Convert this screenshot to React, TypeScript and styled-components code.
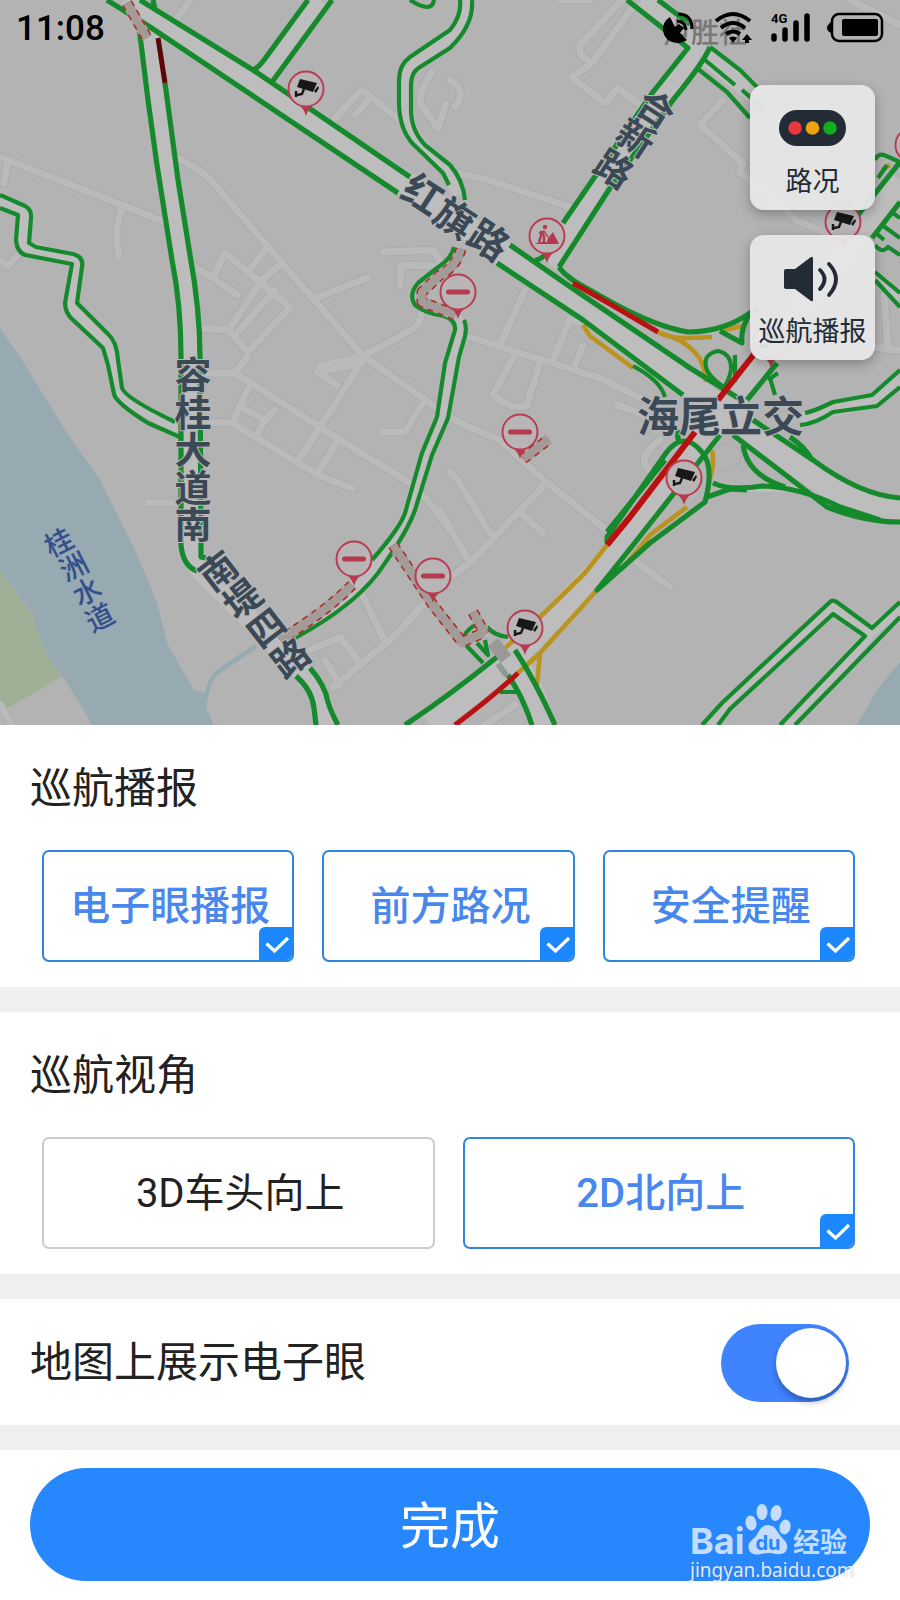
import React, { useState } from "react";
import styled, { createGlobalStyle } from "styled-components";

const Global = createGlobalStyle`
  *, *::before, *::after { box-sizing: border-box; }
  body {
    margin: 0;
    background: #fff;
    color: #222;
    font-family: Roboto, "Noto Sans CJK SC", sans-serif;
  }
  button, input { font: inherit; margin: 0; }
`;

const GREEN = "#158a2c";
const RED = "#b91111";
const AMBER = "#bb9420";
const ROAD = "#bdbdbd";

/* ---------- map ---------- */

const MapArea = styled.section`
  position: relative;
  height: 725px;
  overflow: hidden;
  background: #b3b3b3;
`;

const MapCanvas = styled.svg`
  display: block;
  width: 100%;
  height: 100%;
  text {
    font-family: "Noto Sans CJK SC", sans-serif;
    text-anchor: middle;
    dominant-baseline: central;
  }
`;

const lanes = [
  "M0 157L165 222M8 160L4 183M122 208Q114 230 119 256",
  "M178 158Q205 172 215 185L282 263L363 356L440 410Q450 420 500 440L547 483L612 534M637 562L670 587",
  "M193 266L213 278L237 295M213 278L225 253L290 307L248 352L228 330L200 328M248 272L267 247M282 263L262 280L230 328M275 290L237 333",
  "M315 298L367 278M320 367L363 356L415 328Q424 318 420 308",
  "M205 373L235 373L345 443L410 483Q430 500 450 530M247 357L235 373M250 385L232 423L320 476L352 488M363 360L297 463M338 440L317 475M242 408L265 420L275 410M265 420L258 433",
  "M355 365L317 372L337 385M423 403L405 432L383 432",
  "M383 252L433 250L443 265M400 285L401 265L440 266",
  "M470 337L510 350L600 378L645 400M500 345L525 290M513 358L493 395Q515 412 527 405L540 362M552 362L570 320L590 325M573 370L583 345",
  "M450 472L458 480L490 533M546 483L470 563L450 577L393 637L333 688M440 510L470 563M519 512L543 533M360 590L383 638M310 650L340 637L360 663M325 660L340 685",
  "M622 0L580 45Q578 56 592 63L572 77L605 103L618 88L640 105M592 63L632 8M450 172L485 179L570 207",
  "M850 0L900 25M723 100L700 125L743 163L740 172L775 200L796 220L830 235",
  "M335 118L362 90L397 118M355 115L370 98M432 72Q420 90 420 103L438 128L446 104M450 80Q468 90 455 107",
  "M190 0L178 17M485 725L515 705M148 503L175 503M617 405L645 415M660 440Q632 460 655 475M190 430Q205 420 232 423",
  "M900 350L850 345M884 295L888 350M590 0L560 0M0 260L8 266L20 252M0 705L12 725",
];

const roadBeds = [
  { d: "M124 0L420 193L504 254L660 364L745 425Q815 480 850 500Q875 510 900 510", w: 24 },
  { d: "M149 32L160 130L184 270Q190 310 191 357L191 545Q191 562 205 575L305 674Q322 690 328 725", w: 19 },
  { d: "M320 0L264 74", w: 22 },
  { d: "M642 0L697 48L660 100L550 265", w: 19 },
  { d: "M900 180L766 358L602 567L511 660Q470 695 430 725", w: 24 },
  { d: "M502 645Q530 675 544 725", w: 23 },
  { d: "M466 0Q470 22 450 37L409 67Q402 80 405 110Q409 135 430 153Q448 165 458 195", w: 12 },
  { d: "M456 318L461 330L443 417L425 457L408 513L395 540L365 578Q340 605 285 638", w: 12 },
  { d: "M0 201L22 210Q26 230 22 245L75 259L71 306L108 343Q114 390 122 398L180 430", w: 11 },
  { d: "M800 419L875 401L900 380M710 725L725 707L833 606L869 632L900 609M869 635L787 725M875 276L900 298", w: 12 },
  { d: "M704 54L757 95", w: 20 },
  { d: "M715 485Q740 490 800 488", w: 7 },
];

const greenMajor = [
  "M140 0L253 70L410 177M510 245L572 288L690 368L738 398",
  "M107 0L150 27L398 193M497 263L583 320L683 395",
  "M753 420L813 460Q860 495 900 498",
  "M733 435L783 473L827 507Q865 522 900 522",
  "M139 27L148 100L157 165L172 260Q181 305 181 357L181 545Q183 566 197 571M296 676Q312 690 314 708L316 725",
  "M165 83L178 180L190 255Q200 310 200 357L201 557L206 558M310 668Q325 685 328 702Q331 712 338 725",
  "M308 0L264 60Q258 68 253 70M332 0L272 82M153 0L155 10",
  "M627 0L688 48L653 92L563 223M658 0L690 24M710 47Q704 62 673 100L610 188L559 267M555 240Q545 260 535 260",
  "M559 267Q566 278 590 290Q650 326 688 332Q728 332 758 307",
  "M900 162L858 215M900 202L872 238",
  "M777 363L747 400M720 435L637 540L597 590L650 543L705 502Q715 465 701 451Q683 430 666 453L607 537L607 543M665 460L607 532",
  "M497 657Q450 695 405 725M515 650Q535 680 555 725M508 675Q523 697 532 725",
  "M743 445Q747 475 785 487M713 483Q730 491 762 486Q800 487 840 507L880 520M707 497L730 489L747 490",
  "M790 437Q805 447 812 460M720 331L742 343Q740 330 750 313M679 430Q676 438 680 442",
];

const greenMinor = [
  "M0 195L25 206Q32 210 31 218L29 243L36 247L73 254Q84 257 82 267L77 303L108 334Q117 342 118 360L122 388Q125 398 175 422",
  "M0 208L18 215L16 240Q17 252 25 255L72 264L65 303Q65 313 73 320L103 348L108 365L114 394Q116 403 148 423L180 437",
  "M460 0Q462 15 450 30L410 57Q399 65 399 80L399 105Q400 130 413 144L443 173L449 185",
  "M472 0Q474 25 450 48L420 67Q411 72 411 85L411 110Q411 130 425 145L450 165Q463 180 465 200M410 0Q432 14 434 0",
  "M710 47L740 70L757 87M705 60L735 85M698 69L727 92L750 118M742 90L765 110",
  "M454 247Q452 258 437 268L418 283Q408 295 415 305Q425 313 444 316Q456 320 455 330L445 363L437 417L422 453L405 513Q400 528 372 560",
  "M464 320Q467 326 465 336L459 357L448 418L432 455L415 510Q408 530 385 563Q360 603 295 638",
  "M805 413Q815 411 833 402L872 395L900 370M800 425Q815 424 833 412L877 406L900 387",
  "M702 725L722 703L830 602Q833 599 838 603L872 628L900 602M718 725L730 709L833 614L865 636L780 725M795 725L873 645L900 617",
  "M875 160Q878 153 884 155L900 162M875 245Q882 254 888 247L900 255M875 272L900 293M875 280L900 307M876 233L884 240M882 225L900 238M893 213L900 218M878 178L887 165",
  "M728 390Q708 377 706 367Q703 354 718 351Q732 354 731 370Q729 382 722 389M735 355L735 382M633 366Q660 380 665 397",
  "M770 378L775 395M778 373L768 380M463 642L483 663M463 642Q463 632 475 625M487 627Q495 636 508 637M477 643L488 655L485 640M500 692L518 692",
];

const closures = [
  "M127 3L147 38",
  "M461 249Q456 267 440 275L422 292L422 302L438 308L455 315",
  "M352 585Q328 610 280 640",
  "M393 545L433 605L462 642L483 633M473 612L485 634",
  "M523 459L549 439",
];

type PinKind = "camera" | "closed" | "works";
const pins: { x: number; y: number; kind: PinKind }[] = [
  { x: 306, y: 89, kind: "camera" },
  { x: 547, y: 236, kind: "works" },
  { x: 458, y: 292, kind: "closed" },
  { x: 520, y: 432, kind: "closed" },
  { x: 684, y: 478, kind: "camera" },
  { x: 354, y: 559, kind: "closed" },
  { x: 433, y: 576, kind: "closed" },
  { x: 525, y: 628, kind: "camera" },
  { x: 843, y: 222, kind: "camera" },
  { x: 771, y: 341, kind: "camera" },
  { x: 913, y: 145, kind: "camera" },
];

function Pin({ x, y, kind }: { x: number; y: number; kind: PinKind }) {
  return (
    <g transform={`translate(${x} ${y})`}>
      <path d="M-7 16Q-2 20 0 27Q2 20 7 16Z" fill="#b43a4e" />
      <circle r="17.5" fill="#b9b5b6" stroke="#b83d53" strokeWidth="2" />
      {kind === "closed" && <rect x="-12" y="-2.5" width="24" height="5" rx="2.5" fill="#b43a4e" />}
      {kind === "camera" && (
        <g fill="#171717">
          <path d="M-6-10L11-6L7 3L-9-2Z" />
          <path d="M8 2L12-3L13-1L10 4Z" />
          <path d="M-2 0L-4 5L-9 6M-10 2L-10 8" fill="none" stroke="#171717" strokeWidth="2.4" />
        </g>
      )}
      {kind === "works" && (
        <g fill="#b43a4e">
          <circle cx="-2" cy="-9" r="2.2" />
          <path d="M-12 8L-8 6L0 6L1 2L6-4L12 8Z" />
          <path d="M-6-5L-6 0L-8 6M-5-4L-3 0L-3 6" fill="none" stroke="#b43a4e" strokeWidth="2.4" />
          <path d="M-8-3L-3-5L1 1" fill="none" stroke="#b43a4e" strokeWidth="1.4" />
        </g>
      )}
    </g>
  );
}

const labels: { size: number; rotate: number; chars: [string, number, number][] }[] = [
  { size: 39, rotate: 33, chars: [["红", 424, 192], ["旗", 456, 216], ["路", 490, 238]] },
  { size: 37, rotate: 0, chars: [["容", 193, 373], ["桂", 193, 411], ["大", 193, 448], ["道", 193, 486], ["南", 193, 523]] },
  { size: 37, rotate: -38, chars: [["南", 217, 569], ["堤", 241, 597], ["四", 265, 626], ["路", 289, 656]] },
  { size: 37, rotate: 33, chars: [["合", 657, 107], ["新", 637, 136], ["路", 615, 167]] },
  { size: 42, rotate: 0, chars: [["海", 658, 413], ["尾", 700, 413], ["立", 741, 413], ["交", 783, 413]] },
];

function CityMap() {
  return (
    <MapCanvas viewBox="0 0 900 725" preserveAspectRatio="xMidYMid slice" role="img" aria-label="地图">
      <rect width="900" height="725" fill="#b3b3b3" />
      <path d="M0 570L30 612L62 677L8 708L0 706Z" fill="#a0b097" />
      <path d="M0 328L22 360L65 430L100 480L135 550L156 600L168 645L194 690L205 693Q207 680 215 671L255 644L257 648L216 676Q208 690 206 708L214 725L92 725Q62 672 50 660Q35 630 33 615L0 570Z" fill="#97a9b1" />
      <path d="M900 662L877 690L857 725H900Z" fill="#97a9b1" />

      <g fill="none" strokeLinecap="round" strokeLinejoin="round">
        {lanes.map((d) => <path key={d} d={d} stroke="#a9acad" strokeWidth="9" />)}
        {lanes.map((d) => <path key={d} d={d} stroke="#bababa" strokeWidth="7" />)}
        <circle cx="727" cy="457" r="14" fill="#b3b3b3" stroke="#a9acad" />
      </g>
      <g fill="none" strokeLinejoin="round">
        {roadBeds.map((r) => <path key={r.d} d={r.d} stroke={ROAD} strokeWidth={r.w} />)}
        <g stroke={AMBER} strokeWidth="4.6">
          <path d="M583 325L590 336L633 368M658 332Q670 339 690 338L712 337M720 331L742 326M660 333Q705 345 706 382" />
          <path d="M712 450Q715 462 710 478M687 507L650 535L627 563M607 545L585 573L540 617L505 648M597 590L540 653L518 673M540 653L537 685M882 170L890 165" />
        </g>
        {greenMinor.map((d) => <path key={d} d={d} stroke={GREEN} strokeWidth="4.2" />)}
        {greenMajor.map((d) => <path key={d} d={d} stroke={GREEN} strokeWidth="5.2" />)}
        <path d="M573 283L610 304L658 332M455 725Q495 695 518 673" stroke={RED} strokeWidth="5" />
        <path d="M755 353L718 400M695 432L630 517L607 545" stroke={RED} strokeWidth="6" />
        <path d="M158 38L165 83" stroke="#5c0707" strokeWidth="5" />
        {closures.map((d) => (
          <g key={d}>
            <path d={d} stroke="#a7a3a2" strokeWidth="11" />
            <path d={d} stroke="#aa2a20" strokeWidth="11" strokeDasharray="6 5" />
            <path d={d} stroke="#a49a98" strokeWidth="8" />
          </g>
        ))}
        <path d="M493 642L506 659" stroke="#999" strokeWidth="13" />
        <path d="M498 664L507 676" stroke="#92999b" strokeWidth="6" />
      </g>

      {pins.map((p) => <Pin key={`${p.x}-${p.y}`} {...p} />)}

      {labels.map((label, i) => (
        <g key={i} fontSize={label.size} fontWeight="700" fill="#3b4855" stroke="#b8b8b8" strokeWidth="2" paintOrder="stroke">
          {label.chars.map(([ch, x, y]) => (
            <text key={`${x}-${y}`} transform={`translate(${x} ${y}) rotate(${label.rotate})`}>{ch}</text>
          ))}
        </g>
      ))}
      <g fontSize="28" fontWeight="500" fill="#344f8c">
        {([["桂", 58, 541], ["洲", 73, 565], ["水", 86, 590], ["道", 99, 616]] as [string, number, number][]).map(([ch, x, y]) => (
          <text key={y} transform={`translate(${x} ${y}) rotate(-27)`}>{ch}</text>
        ))}
      </g>
      <text x="705" y="31" fontSize="28" fontWeight="500" fill="#777">卢胜社</text>
    </MapCanvas>
  );
}

/* ---------- status bar ---------- */

const StatusBar = styled.header`
  position: absolute;
  top: 0;
  left: 0;
  right: 0;
  height: 58px;
  padding: 0 16px;
  display: flex;
  align-items: center;
  justify-content: space-between;
  color: #000;
`;

const Clock = styled.time`
  font-size: 35px;
  line-height: 56px;
  font-weight: 500;
`;

const SignalDrawing = styled.svg`
  align-self: flex-start;
`;

function StatusIcons() {
  return (
    <SignalDrawing width="224" height="56" viewBox="660 0 224 56" fill="none" stroke="#000" role="img" aria-label="4G">
      <path d="M670 17Q662 22 663 31Q665 42 677 43Q683 43 687 40L680 33L684 28L679 24L675 27Z" fill="#000" stroke="none" />
      <path d="M677 21Q685 21 686 30M678 14Q692 14 692 29" strokeWidth="3.2" />
      <path d="M716 21Q733 7 750 21M721 28Q733 18 745 28M726 34Q733 29 740 34" strokeWidth="4" />
      <path d="M729 38Q733 35 737 38L733 43ZM742 40L747 34L752 40H749V43H745V40Z" fill="#000" stroke="none" />
      <path d="M774 36V39M785 30V39M796 23V39M807 16V39" strokeWidth="5.5" strokeLinecap="round" />
      <text x="771" y="23" fontFamily="Roboto, sans-serif" fontSize="13" fontWeight="700" fill="#000" stroke="none">4G</text>
      <rect x="832" y="14" width="50" height="27" rx="7" strokeWidth="2.5" />
      <rect x="842" y="19" width="36" height="17" rx="2" fill="#000" stroke="none" />
      <path d="M831 22Q827 25 827 28Q827 31 831 33Z" fill="#000" stroke="none" />
    </SignalDrawing>
  );
}

/* ---------- floating map buttons ---------- */

const FloatingTools = styled.div`
  position: absolute;
  top: 85px;
  right: 25px;
  display: flex;
  flex-direction: column;
  gap: 25px;
`;

const ToolButton = styled.button`
  width: 125px;
  height: 125px;
  padding: 17px 0 0;
  display: flex;
  flex-direction: column;
  align-items: center;
  gap: 8px;
  border: 0;
  border-radius: 14px;
  background: rgba(231, 231, 231, 0.95);
  box-shadow: 0 4px 12px rgba(0, 0, 0, 0.28);
  color: #222b36;
  font-size: 27px;
  line-height: 40px;
  white-space: nowrap;
  svg { display: block; flex: none; }
`;

/* ---------- settings sheet ---------- */

const Sheet = styled.main`
  background: #efefef;
  display: flex;
  flex-direction: column;
  gap: 25px;
`;

const Group = styled.fieldset`
  min-width: 0;
  margin: 0;
  border: 0;
  padding: 34px 45px 25px 42px;
  background: #fff;
`;

const Title = styled.legend`
  float: left;
  width: 100%;
  margin: 0 0 31px -12px;
  padding: 0;
  font-size: 42px;
  line-height: 60px;
`;

const Options = styled.div<{ $columns: number }>`
  clear: both;
  display: grid;
  grid-template-columns: repeat(${(p) => p.$columns}, 1fr);
  gap: 28px;
`;

const OptionCard = styled.label<{ $on: boolean }>`
  position: relative;
  height: 112px;
  padding: 2px 0 0 4px;
  display: flex;
  align-items: center;
  justify-content: center;
  overflow: hidden;
  border: 2px solid ${(p) => (p.$on ? "#2f86de" : "#ccc")};
  border-radius: 7px;
  color: ${(p) => (p.$on ? "#4887ee" : "#222")};
  font-size: 40px;
  line-height: 56px;
  font-weight: ${(p) => (p.$on ? 500 : 400)};
  white-space: nowrap;
  cursor: pointer;
`;

const OptionInput = styled.input`
  position: absolute;
  inset: 0;
  appearance: none;
  cursor: pointer;
`;

const Badge = styled.span`
  position: absolute;
  right: -2px;
  bottom: -2px;
  width: 35px;
  height: 35px;
  border-radius: 6px 0 0 0;
  background: #1c88ff;
  pointer-events: none;
  svg { display: block; }
`;

function Option(props: { type: "checkbox" | "radio"; name: string; text: string; on: boolean; onPick: () => void }) {
  return (
    <OptionCard $on={props.on}>
      <OptionInput type={props.type} name={props.name} checked={props.on} onChange={props.onPick} />
      {props.text}
      {props.on && (
        <Badge>
          <svg width="35" height="35" viewBox="0 0 35 35" fill="none" stroke="#fff" strokeWidth="3.2" aria-hidden="true">
            <path d="M7.5 16.500L15.500 24L29 11" />
          </svg>
        </Badge>
      )}
    </OptionCard>
  );
}

const SwitchRow = styled.label`
  min-height: 126px;
  padding: 2px 51px 0 30px;
  display: flex;
  align-items: center;
  justify-content: space-between;
  background: #fff;
  font-size: 42px;
  line-height: 60px;
`;

const Switch = styled.input`
  appearance: none;
  flex: none;
  width: 128px;
  height: 78px;
  padding: 4px 3px;
  border-radius: 39px;
  background: #bbb;
  display: flex;
  cursor: pointer;
  &::before {
    content: "";
    width: 70px;
    height: 70px;
    border-radius: 50%;
    background: #fff;
    box-shadow: 0 4px 6px rgba(0, 0, 0, 0.3);
  }
  &:checked {
    justify-content: flex-end;
    background: #4083ff;
  }
`;

const Footer = styled.footer`
  position: relative;
  padding: 18px 30px 19px;
  background: #fff;
`;

const DoneButton = styled.button`
  display: block;
  width: 100%;
  height: 113px;
  padding: 4px 0 0;
  border: 0;
  border-radius: 57px;
  background: #2787ff;
  color: #fff;
  font-size: 50px;
  line-height: 72px;
  cursor: pointer;
`;

const Watermark = styled.div`
  position: absolute;
  right: 46px;
  bottom: 17px;
  width: 164px;
  display: flex;
  flex-direction: column;
  pointer-events: none;
  svg { display: block; margin-bottom: -10px; }
`;

const SiteUrl = styled.span`
  color: rgba(255, 255, 255, 0.85);
  font-family: "Noto Sans", sans-serif;
  font-size: 19px;
  line-height: 26px;
  text-shadow: 0 0 2px rgba(90, 110, 140, 0.5);
`;

const broadcastItems = ["电子眼播报", "前方路况", "安全提醒"];
const viewItems = ["3D车头向上", "2D北向上"];

export default function App() {
  const [broadcast, setBroadcast] = useState<string[]>(broadcastItems);
  const [view, setView] = useState(viewItems[1]);
  const [showCameras, setShowCameras] = useState(true);

  const toggle = (item: string) =>
    setBroadcast((now) => (now.includes(item) ? now.filter((i) => i !== item) : [...now, item]));

  return (
    <>
      <Global />
      <MapArea>
        <CityMap />
        <StatusBar>
          <Clock>11:08</Clock>
          <StatusIcons />
        </StatusBar>
        <FloatingTools>
          <ToolButton type="button">
            <svg width="68" height="52" viewBox="0 0 68 52" aria-hidden="true">
              <rect y="8" width="67" height="36" rx="18" fill="#222b36" />
              <circle cx="16" cy="26" r="6.8" fill="#e8393c" />
              <circle cx="33.5" cy="26" r="6.8" fill="#eea30c" />
              <circle cx="51" cy="26" r="6.8" fill="#0fae1c" />
            </svg>
            路况
          </ToolButton>
          <ToolButton type="button">
            <svg width="68" height="52" viewBox="0 0 68 52" aria-hidden="true">
              <path d="M7 17H16L32 5Q34 4 34 7V48Q34 50 32 49L16 37H7Q5 37 5 35V19Q5 17 7 17Z" fill="#222b36" />
              <path d="M41 18Q50 27 41 37M50 12Q64 27 50 43" fill="none" stroke="#222b36" strokeWidth="3.8" strokeLinecap="round" />
            </svg>
            巡航播报
          </ToolButton>
        </FloatingTools>
      </MapArea>

      <Sheet>
        <Group>
          <Title>巡航播报</Title>
          <Options $columns={3}>
            {broadcastItems.map((item) => (
              <Option key={item} type="checkbox" name="broadcast" text={item} on={broadcast.includes(item)} onPick={() => toggle(item)} />
            ))}
          </Options>
        </Group>

        <Group>
          <Title>巡航视角</Title>
          <Options $columns={2}>
            {viewItems.map((item) => (
              <Option key={item} type="radio" name="view" text={item} on={view === item} onPick={() => setView(item)} />
            ))}
          </Options>
        </Group>

        <SwitchRow>
          地图上展示电子眼
          <Switch type="checkbox" role="switch" checked={showCameras} onChange={() => setShowCameras(!showCameras)} />
        </SwitchRow>

        <Footer>
          <DoneButton type="button">完成</DoneButton>
          <Watermark>
            <svg width="164" height="64" viewBox="0 0 164 64" fill="#c3dcff" aria-hidden="true">
              <text x="0" y="51" fontFamily="Inter, sans-serif" fontSize="36" fontWeight="700">Bai</text>
              <ellipse cx="61" cy="20" rx="5.5" ry="7.5" transform="rotate(-8 61 20)" />
              <ellipse cx="72" cy="9" rx="5.5" ry="8" />
              <ellipse cx="86" cy="10" rx="5.5" ry="8" transform="rotate(10 86 10)" />
              <ellipse cx="95" cy="24" rx="5.5" ry="7.5" transform="rotate(12 95 24)" />
              <path d="M78 22Q84 22 87 28Q91 34 95 38Q99 43 96 48Q93 52 86 51Q78 49 71 51Q62 53 59 47Q57 41 62 37Q67 33 69 28Q72 22 78 22Z" />
              <text x="78" y="47" textAnchor="middle" fontFamily="Inter, sans-serif" fontSize="20" fontWeight="700" fill="#2787ff">du</text>
              <text x="103" y="49" fontFamily="'Noto Sans CJK SC', sans-serif" fontSize="27" fontWeight="700">经验</text>
            </svg>
            <SiteUrl>jingyan.baidu.com</SiteUrl>
          </Watermark>
        </Footer>
      </Sheet>
    </>
  );
}
